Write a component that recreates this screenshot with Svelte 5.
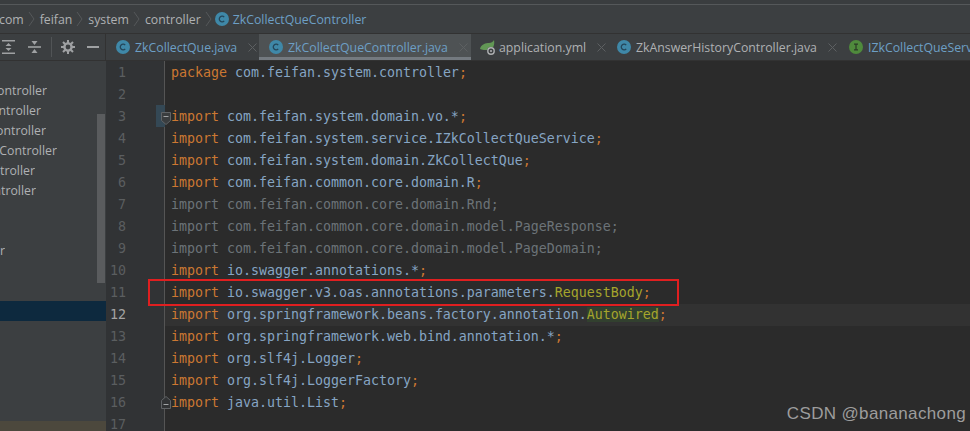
<script>
    const crumbs = ['com', 'feifan', 'system', 'controller'];

    const tabs = [
        { name: 'ZkCollectQue.java', icon: 'c', width: 153 },
        { name: 'ZkCollectQueController.java', icon: 'c', width: 212, active: true },
        { name: 'application.yml', icon: 'spring', width: 137, plain: true },
        { name: 'ZkAnswerHistoryController.java', icon: 'c', width: 231, plain: true },
        { name: 'IZkCollectQueService.java', icon: 'i', width: 200, plain: false }
    ];

    // right edge of each tree label, the panel cuts the rest off on the left
    const tree = [
        { text: 'ZkAnswerController', end: 47 },
        { text: 'ZkUserController', end: 41 },
        { text: 'ZkCourseController', end: 46 },
        { text: 'ZkCollectQueController', end: 57 },
        { text: 'ZkTagController', end: 35 },
        { text: 'ZkLogController', end: 36 },
        { text: '', end: 0 },
        { text: '', end: 0 },
        { text: 'Mapper', end: 5 }
    ];

    const lines = [
        [['kw', 'package'], ['pk', ' com.feifan.system.controller'], ['kw', ';']],
        [],
        [['kw', 'import'], ['pk', ' com.feifan.system.domain.vo.*'], ['kw', ';']],
        [['kw', 'import'], ['pk', ' com.feifan.system.service.IZkCollectQueService'], ['kw', ';']],
        [['kw', 'import'], ['pk', ' com.feifan.system.domain.ZkCollectQue'], ['kw', ';']],
        [['kw', 'import'], ['pk', ' com.feifan.common.core.domain.R'], ['kw', ';']],
        [['off', 'import com.feifan.common.core.domain.Rnd;']],
        [['off', 'import com.feifan.common.core.domain.model.PageResponse;']],
        [['off', 'import com.feifan.common.core.domain.model.PageDomain;']],
        [['kw', 'import'], ['pk', ' io.swagger.annotations.*'], ['kw', ';']],
        [['kw', 'import'], ['pk', ' io.swagger.v3.oas.annotations.parameters.'], ['an', 'RequestBody'], ['kw', ';']],
        [['kw', 'import'], ['pk', ' org.springframework.beans.factory.annotation.'], ['an hit', 'Autowired'], ['kw', ';']],
        [['kw', 'import'], ['pk', ' org.springframework.web.bind.annotation.*'], ['kw', ';']],
        [['kw', 'import'], ['pk', ' org.slf4j.Logger'], ['kw', ';']],
        [['kw', 'import'], ['pk', ' org.slf4j.LoggerFactory'], ['kw', ';']],
        [['kw', 'import'], ['pk', ' java.util.List'], ['kw', ';']],
        []
    ];
</script>

{#snippet badge(kind)}
    {#if kind === 'spring'}
        <svg class="ico spring" viewBox="0 0 16 16" width="16" height="16">
            <path d="M0 10C1 5 6 4 9 4c2 0 4-1 5-3 1 5-1 10-6 10-3 0-6 0-8-1z" fill="#629755" />
            <circle cx="11" cy="12" r="4" fill="#3c3f41" />
            <circle cx="11" cy="12" r="3.2" fill="none" stroke="#afb1b3" stroke-width="1.4" />
            <circle cx="11" cy="12" r="1" fill="#afb1b3" />
        </svg>
    {:else}
        <svg class="ico" viewBox="0 0 14 14" width="14" height="14">
            <circle cx="7" cy="7" r="7" fill={kind === 'i' ? '#4f8a3c' : '#3f88a8'} />
            {#if kind === 'i'}
                <path d="M5 4.2h4M5 9.8h4M7 4.2v5.6" stroke="#2b3a26" stroke-width="1.2" fill="none" />
            {:else}
                <path d="M9.2 5.2A2.8 2.8 0 1 0 9.2 8.8" stroke="#24465a" stroke-width="1.3" fill="none" />
            {/if}
        </svg>
    {/if}
{/snippet}

<div class="ide">
    <div class="topstrip"></div>

    <nav class="crumbs">
        {#each crumbs as c}
            <span>{c}</span>
            <svg class="chev" viewBox="0 0 8 16" width="8" height="16"><path d="M1 1l5 7-5 7" fill="none" stroke="#55585a" /></svg>
        {/each}
        <span class="crumbicon">{@render badge('c')}</span>
        <span class="link">ZkCollectQueController</span>
    </nav>

    <div class="toolrow">
        <div class="tools">
            <svg viewBox="0 0 14 14" width="14" height="14">
                <path d="M0 .8h13M0 13.2h13" stroke="#9fa1a3" stroke-width="1.6" />
                <path d="M6.5 3L3.5 6h6zM3.5 8h6l-3 3z" fill="#9fa1a3" />
            </svg>
            <svg viewBox="0 0 14 14" width="14" height="14">
                <path d="M0 7h13" stroke="#9fa1a3" stroke-width="1.6" />
                <path d="M3.5 1h6l-3 4zM6.5 9l3 4h-6z" fill="#9fa1a3" />
            </svg>
            <i class="sep"></i>
            <svg viewBox="0 0 14 14" width="14" height="14">
                <circle cx="7" cy="7" r="3.6" fill="none" stroke="#9fa1a3" stroke-width="2.4" />
                <path d="M7 0v3M7 11v3M0 7h3M11 7h3M2 2l2 2M10 10l2 2M12 2l-2 2M4 10l-2 2" stroke="#9fa1a3" stroke-width="2" />
            </svg>
            <i class="dash"></i>
        </div>
        <div class="tabs">
            {#each tabs as t}
                <div class="tab" class:active={t.active} class:plain={t.plain} style="flex-basis: {t.width}px">
                    {@render badge(t.icon)}
                    <span class="tabname">{t.name}</span>
                    {#if t.icon !== 'i'}
                        <svg class="x" viewBox="0 0 9 9" width="9" height="9"><path d="M.5.5l8 8M8.5.5l-8 8" stroke="#5d6062" /></svg>
                    {/if}
                </div>
            {/each}
        </div>
    </div>

    <div class="main">
        <aside class="tree">
            <ul>
                {#each tree as row}
                    <li style="width: {row.end}px">{row.text}</li>
                {/each}
            </ul>
            <div class="selected"></div>
            <div class="thumb"></div>
            <div class="foot"></div>
        </aside>

        <div class="editor">
            <div class="gutter">
                {#each lines as _, i}
                    <div class="num" class:cur={i === 11}>{i + 1}</div>
                {/each}
            </div>
            <div class="code">
                {#each lines as parts, i}
                    <div class="line" class:curline={i === 11}>{#each parts as [cls, text]}<span class={cls}>{text}</span>{/each}</div>
                {/each}
            </div>

            <div class="foldbg"></div>
            <svg class="fold" style="top: 51px" viewBox="0 0 10 13" width="10" height="13">
                <path d="M.5.5h9v8l-4.5 4-4.5-4z" fill="#3a3d3f" stroke="#606366" /><path d="M2.5 4.5h5" stroke="#a0a3a5" />
            </svg>
            <svg class="fold" style="top: 335px" viewBox="0 0 10 13" width="10" height="13">
                <path d="M.5 12.5h9v-8l-4.5-4-4.5 4z" fill="#313335" stroke="#606366" /><path d="M2.5 8.5h5" stroke="#a0a3a5" />
            </svg>
            <div class="redbox"></div>
            <div class="mark">CSDN @bananachong</div>
        </div>
    </div>
</div>

<style>
    :global(body) {
        margin: 0;
        background: #2b2b2b;
    }

    .ide {
        width: 970px;
        height: 431px;
        overflow: hidden;
        display: flex;
        flex-direction: column;
        font-family: "Open Sans", "Liberation Sans", sans-serif;
        font-size: 12.3px;
        color: #afb1b3;
        background: #3c3f41;
    }

    .topstrip {
        height: 4px;
        background: #3a3d3f;
        border-bottom: 1px solid #55585a;
    }

    .crumbs {
        height: 28px;
        display: flex;
        align-items: center;
        gap: 4px;
        margin-left: -1px;
        border-bottom: 1px solid #323232;
        white-space: nowrap;
    }

    .crumbicon {
        display: flex;
        margin-left: -2px;
    }

    .link {
        color: #6d9fc5;
    }

    .toolrow {
        height: 26px;
        display: flex;
        border-bottom: 1px solid #323232;
        flex: none;
    }

    .tools {
        width: 106px;
        flex: none;
        display: flex;
        align-items: center;
        gap: 12px;
        padding-left: 2px;
        box-sizing: border-box;
        border-right: 1px solid #323232;
    }

    .sep {
        width: 1px;
        height: 20px;
        background: #515456;
        margin: 0 -3px;
    }

    .dash {
        width: 12px;
        height: 2px;
        background: #9fa1a3;
    }

    .tabs {
        display: flex;
        flex: 1;
        min-width: 0;
        overflow: hidden;
    }

    .tab {
        flex: none;
        box-sizing: border-box;
        height: 26px;
        display: flex;
        align-items: center;
        gap: 5px;
        padding-left: 10px;
        color: #6d9fc5;
        white-space: nowrap;
    }

    .tab.plain {
        color: #afb1b3;
        padding-left: 9px;
    }

    .tab.active {
        background: #4e5254;
        border-bottom: 3px solid #747a80;
        padding-top: 3px;
    }

    .tab .x {
        margin-left: 6px;
    }

    .ico {
        flex: none;
    }

    .spring {
        margin-right: -2px;
    }

    .main {
        flex: 1;
        display: flex;
        min-height: 0;
    }

    .tree {
        position: relative;
        width: 106px;
        flex: none;
        overflow: hidden;
        background: #3c3f41;
    }

    .tree ul {
        list-style: none;
        margin: 0;
        padding: 20px 0 0;
    }

    .tree li {
        height: 20px;
        line-height: 20px;
        display: flex;
        justify-content: flex-end;
        white-space: nowrap;
        overflow: hidden;
    }

    .selected {
        position: absolute;
        left: 0;
        right: 0;
        top: 240px;
        height: 20px;
        background: #0d293e;
    }

    .thumb {
        position: absolute;
        left: 97px;
        width: 8px;
        top: 53px;
        height: 169px;
        background: #5a5c5e;
    }

    .foot {
        position: absolute;
        left: 0;
        right: 0;
        top: 360px;
        bottom: 0;
        background: #4c483d;
    }

    .editor {
        position: relative;
        flex: 1;
        display: flex;
        background: #2b2b2b;
        min-width: 0;
    }

    .gutter {
        width: 59px;
        flex: none;
        padding-top: 1px;
        background: #313335;
        border-right: 1px solid #555;
        box-sizing: border-box;
    }

    .num {
        height: 22px;
        line-height: 22px;
        width: 20px;
        text-align: right;
        font-family: "DejaVu Sans Mono", monospace;
        font-size: 13.3px;
        color: #5b5e60;
    }

    .num.cur {
        color: #a4a3a3;
    }

    .code {
        flex: 1;
        min-width: 0;
        padding-top: 1px;
        font-family: "DejaVu Sans Mono", "Liberation Mono", monospace;
        font-size: 13.29px;
        color: #a9b7c6;
    }

    .line {
        height: 22px;
        line-height: 22px;
        padding-left: 6px;
        white-space: pre;
    }

    .curline {
        background: #323232;
    }

    .kw {
        color: #cc7832;
    }

    .pk {
        color: #86a5c4;
    }

    .off {
        color: #6c7378;
    }

    .an {
        color: #a5a52c;
    }

    .hit {
        background: #32402f;
    }

    .foldbg {
        position: absolute;
        left: 50px;
        top: 44px;
        width: 9px;
        height: 22px;
        background: #344855;
    }

    .fold {
        position: absolute;
        left: 55px;
    }

    .redbox {
        position: absolute;
        left: 42px;
        top: 218px;
        width: 527px;
        height: 23px;
        border: 2px solid #e01f20;
    }

    .mark {
        position: absolute;
        right: 4px;
        top: 343px;
        font-family: "Liberation Sans", sans-serif;
        font-size: 17px;
        color: #9d9d9d;
        letter-spacing: 0.35px;
    }
</style>
